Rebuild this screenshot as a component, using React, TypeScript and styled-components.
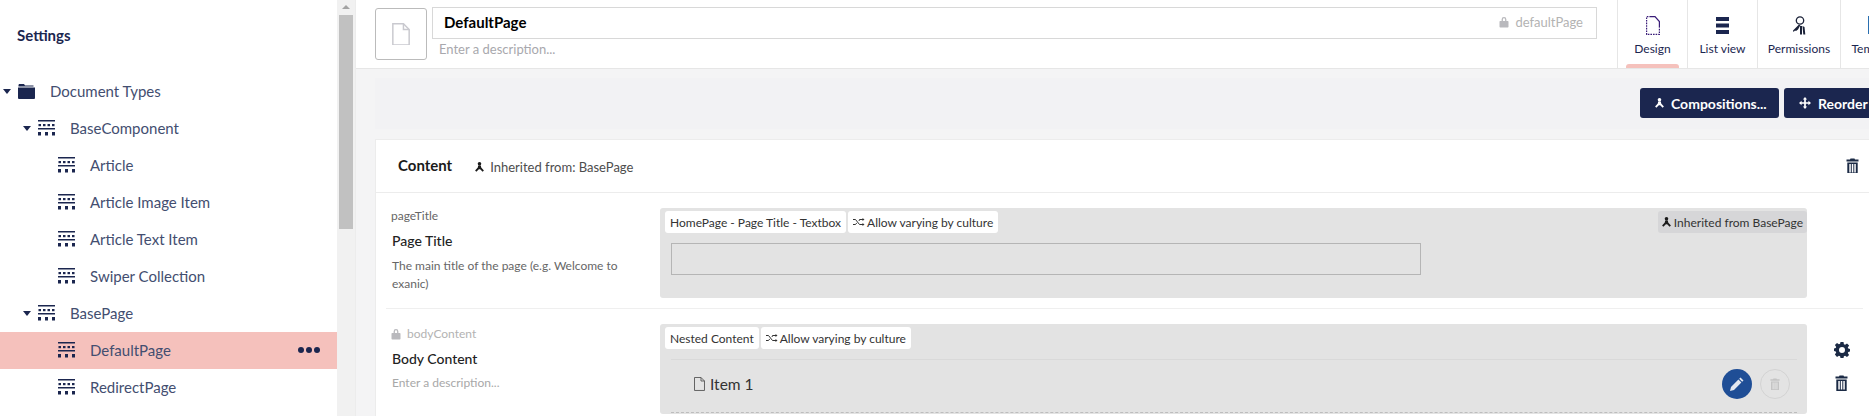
import React from "react";
import styled, { createGlobalStyle } from "styled-components";

const NAVY = "#1b264f";
const FONT = `Lato, "Open Sans", sans-serif`;

const GridIcon = () => (
  <svg width="17" height="16" viewBox="0 0 17 16" fill={NAVY}>
    <rect x="0" y="0" width="17" height="1.500" />
    <rect x="0.500" y="4" width="2.500" height="2.200" />
    <rect x="5" y="4" width="2.500" height="2.200" />
    <rect x="9.500" y="4" width="2.500" height="2.200" />
    <rect x="14" y="4" width="2.500" height="2.200" />
    <rect x="0" y="8" width="17" height="1.500" />
    <rect x="0" y="12" width="3" height="3.500" />
    <rect x="7" y="12" width="3" height="3.500" />
    <rect x="14" y="12" width="3" height="3.500" />
  </svg>
);

const FolderIcon = () => (
  <svg width="17" height="15" viewBox="0 0 17 15" fill={NAVY}>
    <path d="M1 0h5l1 1.500h8.500v1H0.500V1z" />
    <path d="M0 3.500h17V14a1 1 0 0 1-1 1H1a1 1 0 0 1-1-1z" />
  </svg>
);

const LockIcon = () => (
  <svg width="10" height="12" viewBox="0 0 10 12" fill="#b9b9bd">
    <path d="M2.600 5V3.400a2.400 2.400 0 0 1 4.800 0V5h-1.300V3.400a1.100 1.100 0 0 0-2.200 0V5z" />
    <rect x="0.500" y="5" width="9" height="6.500" rx="0.800" />
  </svg>
);

const BranchIcon = ({ color = "#1b1b1b" }: { color?: string }) => (
  <svg width="9" height="10" viewBox="0 0 10 11" fill={color}>
    <circle cx="5" cy="2" r="2" />
    <path d="M3.500 3.800h3l.4 2.200 3 3.300-1.400 1.400L5.700 8H4.300l-2.800 2.700L.1 9.300l3-3.300z" />
  </svg>
);

const ShuffleIcon = () => (
  <svg width="12" height="8" viewBox="0 0 12 8" fill="none" stroke="#333" strokeWidth="1">
    <path d="M0 1.500h2.500l4 5H10M0 6.500h2.500l1.300-1.600M6 3l.5-1.500H10" />
    <path d="M9.500 0l2 1.500-2 1.500zM9.500 5l2 1.500-2 1.500z" fill="#333" stroke="none" />
  </svg>
);

const TrashIcon = ({ color = "#1b2a45", size = 13 }: { color?: string; size?: number }) => (
  <svg width={size} height={size * 1.23} viewBox="0 0 13 16" fill={color}>
    <path d="M4.500 0.500h4l.5 1h3.500v2H0.500v-2H4z" />
    <path
      fillRule="evenodd"
      d="M1.300 4.500h10.400V16H1.300zM3.300 6v8.500h1.500V6zM5.800 6v8.500h1.500V6zM8.300 6v8.500h1.500V6z"
    />
  </svg>
);

const GearIcon = () => (
  <svg width="16" height="16" viewBox="0 0 16 16" fill="#1b2a45">
    <path
      fillRule="evenodd"
      d="M6.500 0h3l.4 2.200 1.200.5L13 1.400l2.100 2.100-1.300 1.900.5 1.200L16 6.900v2.600l-1.700.4-.5 1.200 1.300 1.900-2.100 2.100-1.900-1.300-1.200.5-.4 1.700h-3l-.4-1.700-1.200-.5-1.900 1.300L.9 12.500l1.300-1.900-.5-1.200L0 9.100V6.500l1.700-.4.500-1.200L.9 3 3 .9l1.900 1.300 1.200-.5zM8 5a3 3 0 1 0 0 6 3 3 0 0 0 0-6z"
    />
  </svg>
);

const PageIcon = ({ size = 11, color = "#555" }: { size?: number; color?: string }) => (
  <svg width={size} height={size * 1.27} viewBox="0 0 11 14" fill="none" stroke={color} strokeWidth="0.900">
    <path d="M0.500 0.500h6.500l3.500 3.500v9.500h-10z" />
    <path d="M7 0.500V4h3.500" />
  </svg>
);

const PencilIcon = () => (
  <svg width="14" height="14" viewBox="0 0 14 14" fill="#e4e8f0">
    <path d="M10.500 0.500l3 3-1.300 1.300-3-3zM8.400 2.600l3 3-7.400 7.400-4 1 1-4z" />
  </svg>
);

const GlobalStyle = createGlobalStyle`
  html, body {
    margin: 0;
    height: 100%;
    overflow: hidden;
    font-family: ${FONT};
    background: #fff;
  }
  * { box-sizing: border-box; }
`;

const Shell = styled.div`
  display: flex;
  width: 1869px;
  height: 416px;
  overflow: hidden;
`;

const Sidebar = styled.aside`
  width: 337px;
  flex: none;
  background: #fff;
`;

const SideTitle = styled.h2`
  margin: 0;
  padding: 24px 0 0 17px;
  height: 73px;
  font-size: 15px;
  line-height: 22px;
  font-weight: 700;
  color: ${NAVY};
`;

const TreeRow = styled.div<{ $level: number; $active?: boolean }>`
  display: flex;
  align-items: center;
  height: 37px;
  padding: 0 0 1px ${(p) => 3 + p.$level * 20}px;
  background: ${(p) => (p.$active ? "#f5c1bc" : "transparent")};
  color: #434e70;
  font-size: 15px;
`;

const Caret = styled.span<{ $hidden?: boolean }>`
  width: 0;
  height: 0;
  margin-right: 7px;
  border-left: 4px solid transparent;
  border-right: 4px solid transparent;
  border-top: 5px solid ${(p) => (p.$hidden ? "transparent" : NAVY)};
`;

const TreeLabel = styled.span`
  margin-left: 15px;
`;

const Dots = styled.span`
  margin-left: auto;
  margin-right: 17px;
  display: flex;
  gap: 2px;
`;

const Dot = styled.i`
  width: 6px;
  height: 6px;
  border-radius: 50%;
  background: ${NAVY};
`;

const ScrollTrack = styled.div`
  width: 18px;
  flex: none;
  padding: 5px 2px 0;
  background: #f1f1f1;
`;

const ScrollArrow = styled.div`
  width: 0;
  height: 0;
  margin: 0 auto 6px;
  border-left: 4px solid transparent;
  border-right: 4px solid transparent;
  border-bottom: 4px solid #a3a3a3;
`;

const ScrollThumb = styled.div`
  height: 214px;
  background: #c1c1c1;
`;

const Main = styled.main`
  flex: 1;
  min-width: 0;
  background: #f4f4f5;
  border-left: 1px solid #ececec;
`;

const Header = styled.header`
  display: flex;
  height: 69px;
  padding-left: 19px;
  background: #fff;
  border-bottom: 1px solid #e6e6e6;
`;

const IconBox = styled.div`
  flex: none;
  width: 52px;
  height: 52px;
  margin-top: 8px;
  display: flex;
  align-items: center;
  justify-content: center;
  border: 1px solid #bbb;
  border-radius: 3px;
`;

const NameColumn = styled.div`
  width: 1165px;
  margin: 7px 0 0 5px;
  flex: none;
`;

const NameInput = styled.div`
  display: flex;
  align-items: center;
  justify-content: space-between;
  height: 32px;
  padding: 0 13px 2px 11px;
  border: 1px solid #d8d8d8;
  font-size: 15px;
  font-weight: 700;
  color: #000;
`;

const Alias = styled.span`
  display: flex;
  align-items: center;
  gap: 6px;
  font-size: 13px;
  font-weight: 400;
  color: #b3b3b3;
`;

const Description = styled.div`
  margin: 1px 0 0 7px;
  font-size: 13px;
  line-height: 18px;
  color: #a8a8ad;
`;

const Tabs = styled.nav`
  display: flex;
  margin-left: 20px;
`;

const Tab = styled.div<{ $width: number; $active?: boolean }>`
  position: relative;
  width: ${(p) => p.$width}px;
  flex: none;
  padding-top: 16px;
  display: flex;
  flex-direction: column;
  align-items: center;
  gap: 7px;
  border-left: 1px solid #e6e6e6;
  font-size: 12px;
  line-height: 15px;
  color: ${NAVY};
  white-space: nowrap;

  &::after {
    content: "";
    display: ${(p) => (p.$active ? "block" : "none")};
    position: absolute;
    left: 8px;
    right: 8px;
    bottom: 0;
    height: 4px;
    border-radius: 3px 3px 0 0;
    background: #f5c1bc;
  }
`;

const TabIconSlot = styled.span`
  display: flex;
  height: 18px;
  align-items: center;
`;

const Content = styled.div`
  padding: 9px 0 0 19px;
`;

const Toolbar = styled.div`
  display: flex;
  justify-content: flex-end;
  gap: 5px;
  height: 51px;
  padding-top: 10px;
  background: #f2f2f4;
  margin-right: -115px;
`;

const Button = styled.button<{ $width: number }>`
  width: ${(p) => p.$width}px;
  flex: none;
  height: 30px;
  display: flex;
  align-items: center;
  gap: 7px;
  padding: 0 0 0 15px;
  border: 0;
  border-radius: 3px;
  background: ${NAVY};
  color: #fff;
  font-family: ${FONT};
  font-size: 14px;
  font-weight: 700;
  white-space: nowrap;
`;

const Card = styled.section`
  margin-top: 10px;
  margin-right: -2px;
  background: #fff;
  border: 1px solid #ececec;
  border-right: 0;
`;

const CardHead = styled.div`
  display: flex;
  align-items: center;
  height: 53px;
  padding: 0 7px 3px 22px;
  border-bottom: 1px solid #ececec;
`;

const CardTitle = styled.strong`
  font-size: 15px;
  font-weight: 700;
  color: #1a1a1a;
`;

const Inherited = styled.span`
  display: flex;
  align-items: center;
  gap: 6px;
  margin: 5px 0 0 23px;
  font-size: 13px;
  color: #4d4d4d;
`;

const HeadAction = styled.span`
  margin: 2px 5px 0 auto;
  display: flex;
`;

const Row = styled.div<{ $divider?: boolean }>`
  display: grid;
  grid-template-columns: 274px 1fr 56px;
  padding: 15px 0 10px;
  margin: 0 8px 0 10px;
  border-bottom: ${(p) => (p.$divider ? "1px solid #efefef" : "0")};
`;

const Meta = styled.div`
  padding-left: 5px;
  margin-top: -1px;
`;

const MetaAlias = styled.div<{ $locked?: boolean }>`
  display: flex;
  align-items: center;
  gap: 6px;
  margin: ${(p) => (p.$locked ? "2px 0 6px" : "0")};
  font-size: 12px;
  line-height: 18px;
  color: ${(p) => (p.$locked ? "#b3b3b3" : "#666")};
`;

const MetaName = styled.div`
  margin: 6px 0 0 1px;
  font-size: 14px;
  line-height: 20px;
  font-weight: 500;
  color: #222;
`;

const MetaText = styled.p<{ $muted?: boolean }>`
  margin: ${(p) => (p.$muted ? "5px" : "6px")} 0 0 1px;
  width: 235px;
  font-size: 12px;
  line-height: 18px;
  color: ${(p) => (p.$muted ? "#a8a8a8" : "#666")};
`;

const Panel = styled.div<{ $height: number }>`
  position: relative;
  height: ${(p) => p.$height}px;
  padding: 3px 10px 0 5px;
  background: #e3e3e3;
  border-radius: 3px;
`;

const Tags = styled.div`
  display: flex;
  gap: 2px;
`;

const Tag = styled.span<{ $grey?: boolean }>`
  display: inline-flex;
  align-items: center;
  gap: 2px;
  height: 22px;
  padding: 0 5px;
  border-radius: 3px;
  background: ${(p) => (p.$grey ? "#d6d6d8" : "#fff")};
  font-size: 12px;
  color: #333;
  white-space: nowrap;
`;

const InheritTag = styled(Tag)`
  position: absolute;
  top: 3px;
  right: 0;
  gap: 3px;
  padding: 0 4px;
`;

const FakeInput = styled.div`
  width: 750px;
  height: 32px;
  margin: 10px 0 0 6px;
  border: 1px solid #b5b5b5;
`;

const NestedItem = styled.div`
  display: flex;
  align-items: center;
  height: 48px;
  margin: 10px 0 0 6px;
  padding: 0 7px 4px 23px;
  border-top: 1px solid #d9d9d9;
  border-bottom: 1px dashed #bdbdbd;
  box-sizing: content-box;
  font-size: 15.500px;
  color: #333;
  gap: 5px;
`;

const RoundButton = styled.span<{ $filled?: boolean }>`
  flex: none;
  width: 30px;
  height: 30px;
  display: flex;
  align-items: center;
  justify-content: center;
  border-radius: 50%;
  background: ${(p) => (p.$filled ? "#1f4e96" : "transparent")};
  border: ${(p) => (p.$filled ? "0" : "1px solid #d3d3d3")};
`;

const ItemActions = styled.span`
  margin-left: auto;
  display: flex;
  gap: 8px;
`;

const SideActions = styled.div`
  display: flex;
  flex-direction: column;
  align-items: center;
  gap: 17px;
  padding: 18px 0 0 13px;
`;

const treeItems = [
  { label: "BaseComponent", level: 1, open: true },
  { label: "Article", level: 2 },
  { label: "Article Image Item", level: 2 },
  { label: "Article Text Item", level: 2 },
  { label: "Swiper Collection", level: 2 },
  { label: "BasePage", level: 1, open: true },
  { label: "DefaultPage", level: 2, active: true },
  { label: "RedirectPage", level: 2 },
];

const App = () => {
  return (
    <Shell>
      <GlobalStyle />
      <Sidebar>
        <SideTitle>Settings</SideTitle>
        <TreeRow $level={0}>
          <Caret />
          <FolderIcon />
          <TreeLabel>Document Types</TreeLabel>
        </TreeRow>
        {treeItems.map((item) => (
          <TreeRow key={item.label} $level={item.level} $active={item.active}>
            <Caret $hidden={!item.open} />
            <GridIcon />
            <TreeLabel>{item.label}</TreeLabel>
            {item.active && (
              <Dots>
                <Dot />
                <Dot />
                <Dot />
              </Dots>
            )}
          </TreeRow>
        ))}
      </Sidebar>
      <ScrollTrack>
        <ScrollArrow />
        <ScrollThumb />
      </ScrollTrack>
      <Main>
        <Header>
          <IconBox>
            <PageIcon size={18} color="#c9c9cf" />
          </IconBox>
          <NameColumn>
            <NameInput>
              DefaultPage
              <Alias>
                <LockIcon />
                defaultPage
              </Alias>
            </NameInput>
            <Description>Enter a description...</Description>
          </NameColumn>
          <Tabs>
            <Tab $width={70} $active>
              <TabIconSlot>
                <svg width="14" height="19" viewBox="0 0 14 19" fill="none" stroke="#3a1d78" strokeWidth="1.200">
                  <path d="M5 0.600H0.600v17.800h12.800v-7" strokeDasharray="1.600 1" />
                  <path d="M5 0.600h4l4.400 5v6" />
                </svg>
              </TabIconSlot>
              Design
            </Tab>
            <Tab $width={70}>
              <TabIconSlot>
                <svg width="13" height="17" viewBox="0 0 13 17" fill={NAVY}>
                  <rect width="13" height="4" />
                  <rect y="6.500" width="13" height="4" />
                  <rect y="13" width="13" height="4" />
                </svg>
              </TabIconSlot>
              List view
            </Tab>
            <Tab $width={83}>
              <TabIconSlot>
                <svg width="13" height="19" viewBox="0 0 13 19" fill="#1b2238">
                  <circle cx="7" cy="4.500" r="3.700" fill="none" stroke="#1b2238" strokeWidth="1.300" />
                  <path d="M5.500 9h2l-2.500 4.500-2 1.500-1-.5L0.500 16l-.5-1.500 2.500-2.500zM7 10h2v8.500H7zM9.500 10l2 1 .8 7.500h-2z" />
                </svg>
              </TabIconSlot>
              Permissions
            </Tab>
            <Tab $width={75}>
              <TabIconSlot>
                <svg width="20" height="18" viewBox="0 0 20 18" fill="none">
                  <rect x="0.500" y="0.500" width="19" height="17" fill="#fff" stroke="#2a6fb0" />
                  <rect x="2" y="2" width="16" height="14" fill="#c9604a" />
                </svg>
              </TabIconSlot>
              Templates
            </Tab>
          </Tabs>
        </Header>
        <Content>
          <Toolbar>
            <Button $width={139}>
              <BranchIcon color="#fff" />
              Compositions...
            </Button>
            <Button $width={200}>
              <svg width="12" height="12" viewBox="0 0 14 14" fill="#fff">
                <path d="M7 0l2.500 3H8v3h3V4.500L14 7l-3 2.500V8H8v3h1.500L7 14l-2.500-3H6V8H3v1.500L0 7l3-2.500V6h3V3H4.500z" />
              </svg>
              Reorder
            </Button>
          </Toolbar>
          <Card>
            <CardHead>
              <CardTitle>Content</CardTitle>
              <Inherited>
                <BranchIcon />
                Inherited from: BasePage
              </Inherited>
              <HeadAction>
                <TrashIcon />
              </HeadAction>
            </CardHead>
            <Row $divider>
              <Meta>
                <MetaAlias>pageTitle</MetaAlias>
                <MetaName>Page Title</MetaName>
                <MetaText>The main title of the page (e.g. Welcome to exanic)</MetaText>
              </Meta>
              <Panel $height={90}>
                <Tags>
                  <Tag>HomePage - Page Title - Textbox</Tag>
                  <Tag>
                    <ShuffleIcon />
                    Allow varying by culture
                  </Tag>
                </Tags>
                <InheritTag $grey>
                  <BranchIcon />
                  Inherited from BasePage
                </InheritTag>
                <FakeInput />
              </Panel>
              <span />
            </Row>
            <Row>
              <Meta>
                <MetaAlias $locked>
                  <LockIcon />
                  bodyContent
                </MetaAlias>
                <MetaName>Body Content</MetaName>
                <MetaText $muted>Enter a description...</MetaText>
              </Meta>
              <Panel $height={90}>
                <Tags>
                  <Tag>Nested Content</Tag>
                  <Tag>
                    <ShuffleIcon />
                    Allow varying by culture
                  </Tag>
                </Tags>
                <NestedItem>
                  <PageIcon />
                  Item 1
                  <ItemActions>
                    <RoundButton $filled>
                      <PencilIcon />
                    </RoundButton>
                    <RoundButton>
                      <TrashIcon color="#c4c4c4" size={10} />
                    </RoundButton>
                  </ItemActions>
                </NestedItem>
              </Panel>
              <SideActions>
                <GearIcon />
                <TrashIcon />
              </SideActions>
            </Row>
          </Card>
        </Content>
      </Main>
    </Shell>
  );
};

export default App;
